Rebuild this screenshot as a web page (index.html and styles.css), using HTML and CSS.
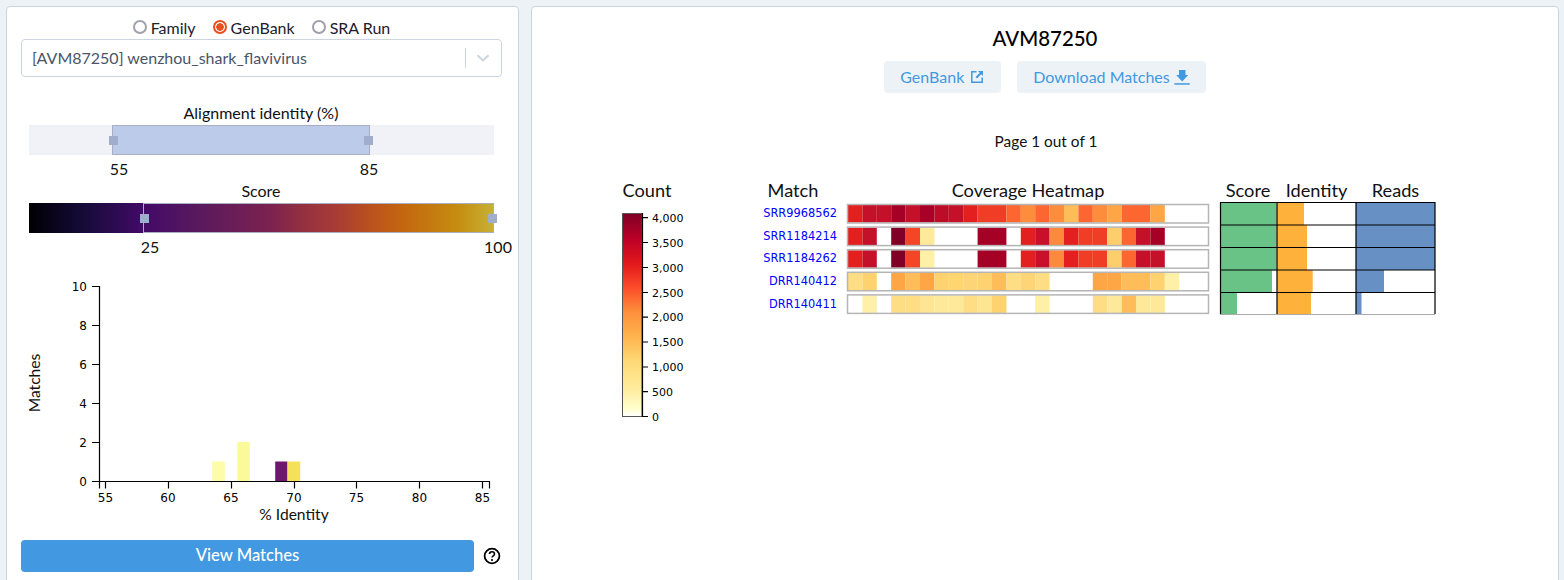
FILE: index.html
```html
<!DOCTYPE html>
<html lang="en">
<head>
<meta charset="utf-8">
<title>AVM87250</title>
<link rel="stylesheet" href="styles.css">
</head>
<body>
<div class="page">
  <aside class="panel side">
    <div class="radios">
      <label class="radio"><span class="dot"></span>Family</label>
      <label class="radio on"><span class="dot"></span>GenBank</label>
      <label class="radio"><span class="dot"></span>SRA Run</label>
    </div>
    <div class="select">
      <span class="select-value">[AVM87250] wenzhou_shark_flavivirus</span>
      <span class="select-sep"></span>
      <svg class="select-chev" width="14" height="8" viewBox="0 0 14 8"><path d="M1.5 1.2 7 6.4l5.5-5.2" fill="none" stroke="#cbd5e0" stroke-width="2"/></svg>
    </div>
    <svg class="sliders" width="511" height="162" viewBox="7 95 511 162">
      <defs>
        <linearGradient id="inferno">
          <stop offset="0" stop-color="#000004"/>
          <stop offset=".12" stop-color="#160b39"/>
          <stop offset=".245" stop-color="#420a68"/>
          <stop offset=".37" stop-color="#5a1a5c"/>
          <stop offset=".52" stop-color="#7c2250"/>
          <stop offset=".59" stop-color="#943040"/>
          <stop offset=".66" stop-color="#a83c35"/>
          <stop offset=".73" stop-color="#b9501f"/>
          <stop offset=".81" stop-color="#c4680f"/>
          <stop offset=".92" stop-color="#c58c10"/>
          <stop offset="1" stop-color="#c6b135"/>
        </linearGradient>
      </defs>
      <text class="lbl" x="261" y="119" text-anchor="middle">Alignment identity (%)</text>
      <rect x="29" y="125" width="465" height="30" fill="#f0f2f8"/>
      <rect x="112.5" y="125.5" width="257" height="29" fill="#bccbea" stroke="#a9aec2"/>
      <rect x="109" y="136" width="9" height="9" fill="#a0aecb"/>
      <rect x="364" y="136" width="9" height="9" fill="#a0aecb"/>
      <text class="lbl" x="119" y="175" text-anchor="middle">55</text>
      <text class="lbl" x="369" y="175" text-anchor="middle">85</text>
      <text class="lbl" x="261" y="197" text-anchor="middle">Score</text>
      <rect x="29" y="203" width="465" height="30" fill="url(#inferno)"/>
      <rect x="143.5" y="203.5" width="350" height="29" fill="none" stroke="#a9aec2"/>
      <rect x="140" y="214" width="9" height="9" fill="#a0aecb"/>
      <rect x="488" y="214" width="9" height="9" fill="#a0aecb"/>
      <text class="lbl" x="150" y="253" text-anchor="middle">25</text>
      <text class="lbl" x="498" y="253" text-anchor="middle">100</text>
    </svg>
    <svg class="hist" width="511" height="262" viewBox="7 270 511 262">
      <rect x="212.3" y="461.5" width="12.5" height="19.5" fill="#fcfda6"/>
      <rect x="237.3" y="442" width="12.5" height="39" fill="#fafa9b"/>
      <rect x="275.2" y="461.5" width="12.2" height="19.5" fill="#6d186e"/>
      <rect x="287.7" y="461.5" width="12.5" height="19.5" fill="#f5e05a"/>
      <path class="ax" d="M92 286.5h7.5V481.500M92 325.500h7.500M92 364.500h7.500M92 403.500h7.500M92 442.500h7.500M92 481.500h397.500v7M99.500 481.500v7M105.500 481.500v7M168.500 481.500v7M231.500 481.500v7M294.500 481.500v7M356.500 481.500v7M419.500 481.500v7M482.500 481.500v7"/>
      <g class="tick" text-anchor="end">
        <text x="87" y="291">10</text><text x="87" y="330">8</text><text x="87" y="369">6</text><text x="87" y="408">4</text><text x="87" y="447">2</text><text x="87" y="486">0</text>
      </g>
      <g class="tick" text-anchor="middle">
        <text x="105.500" y="502">55</text><text x="168" y="502">60</text><text x="231" y="502">65</text><text x="294" y="502">70</text><text x="356.500" y="502">75</text><text x="419.500" y="502">80</text><text x="482.500" y="502">85</text>
      </g>
      <text class="lbl axis-lbl" x="294" y="520" text-anchor="middle">% Identity</text>
      <text class="lbl axis-lbl" transform="translate(40 383) rotate(-90)" text-anchor="middle">Matches</text>
    </svg>
    <div class="actions">
      <button class="view">View Matches</button>
      <svg class="help" width="18" height="18" viewBox="0 0 18 18">
        <circle cx="9" cy="9" r="7.4" fill="none" stroke="#000" stroke-width="1.800"/>
        <path d="M6.500 7.100c0-1.500 1.100-2.300 2.500-2.300s2.500.8 2.500 2.200c0 1.800-2.500 1.800-2.500 3.600" fill="none" stroke="#000" stroke-width="1.600"/>
        <circle cx="9" cy="13" r="1.100"/>
      </svg>
    </div>
  </aside>
  <main class="panel content">
    <h1 class="title">AVM87250</h1>
    <div class="links">
      <a class="link link-ext">GenBank
        <svg width="14" height="14" viewBox="0 0 14 14"><path d="M6.500 1.800H1.800v10.400h10.400V7.500" fill="none" stroke="#4299e1" stroke-width="1.500"/><path d="M8 1h5v5L11.200 4.200 7 8.400 5.600 7l4.200-4.200z" fill="#4299e1"/></svg>
      </a>
      <a class="link link-dl">Download Matches
        <svg width="16" height="15" viewBox="0 0 16 15"><path d="M5 0h6.500v5h2.700L8.200 11.500 2.200 5H5z" fill="#4299e1"/><rect x="0.300" y="13.200" width="15.400" height="1.500" fill="#4299e1"/></svg>
      </a>
    </div>
    <p class="pager">Page 1 out of 1</p>
    <svg class="viz" width="1026" height="250" viewBox="532 175 1026 250">
      <defs>
        <linearGradient id="ylorrd" x1="0" y1="1" x2="0" y2="0">
          <stop offset="0" stop-color="#ffffff"/>
          <stop offset=".04" stop-color="#ffffcc"/>
          <stop offset=".13" stop-color="#ffeda0"/>
          <stop offset=".27" stop-color="#fed976"/>
          <stop offset=".4" stop-color="#feb24c"/>
          <stop offset=".52" stop-color="#fd8d3c"/>
          <stop offset=".63" stop-color="#fc4e2a"/>
          <stop offset=".75" stop-color="#e31a1c"/>
          <stop offset=".87" stop-color="#bd0026"/>
          <stop offset="1" stop-color="#800026"/>
        </linearGradient>
      </defs>
      <g class="head" text-anchor="middle">
        <text x="647" y="197">Count</text>
        <text x="793" y="197">Match</text>
        <text x="1028" y="197">Coverage Heatmap</text>
        <text x="1248" y="197">Score</text>
        <text x="1316.500" y="197">Identity</text>
        <text x="1395.500" y="197">Reads</text>
      </g>

      <rect x="622.500" y="213.500" width="19.500" height="203" fill="url(#ylorrd)" stroke="#555" stroke-width="1"/>
      <path class="ax" d="M642.500 213v204M642 217.700h6M642 242.500h6M642 267.500h6M642 292.500h6M642 317.200h6M642 342h6M642 367h6M642 391.700h6M642 416.500h6"/>
      <g class="tick sm">
        <text x="652" y="222">4,000</text><text x="652" y="247">3,500</text><text x="652" y="272">3,000</text><text x="652" y="296.500">2,500</text><text x="652" y="321">2,000</text><text x="652" y="346">1,500</text><text x="652" y="371">1,000</text><text x="652" y="396">500</text><text x="652" y="421">0</text>
      </g>

      <g class="tick acc" text-anchor="end">
        <text x="837" y="217">SRR9968562</text>
        <text x="837" y="240">SRR1184214</text>
        <text x="837" y="262">SRR1184262</text>
        <text x="837" y="285">DRR140412</text>
        <text x="837" y="308">DRR140411</text>
      </g>

      <g id="r1">
        <rect x="848" y="205" width="14.400" height="17.500" fill="#e2201f"/><rect x="862.400" y="205" width="14.400" height="17.500" fill="#c5102a"/><rect x="876.800" y="205" width="14.400" height="17.500" fill="#c5102a"/><rect x="891.200" y="205" width="14.400" height="17.500" fill="#a50026"/><rect x="905.600" y="205" width="14.400" height="17.500" fill="#c5102a"/><rect x="920" y="205" width="14.400" height="17.500" fill="#a80026"/><rect x="934.400" y="205" width="14.400" height="17.500" fill="#bd0c28"/><rect x="948.800" y="205" width="14.400" height="17.500" fill="#c5102a"/><rect x="963.200" y="205" width="14.400" height="17.500" fill="#e31f1f"/><rect x="977.600" y="205" width="14.400" height="17.500" fill="#f03e26"/><rect x="992" y="205" width="14.400" height="17.500" fill="#f03e26"/><rect x="1006.400" y="205" width="14.400" height="17.500" fill="#fd6631"/><rect x="1020.800" y="205" width="14.400" height="17.500" fill="#fd8d3c"/><rect x="1035.200" y="205" width="14.400" height="17.500" fill="#fd6631"/><rect x="1049.600" y="205" width="14.400" height="17.500" fill="#fd8d3c"/><rect x="1064" y="205" width="14.400" height="17.500" fill="#febd58"/><rect x="1078.400" y="205" width="14.400" height="17.500" fill="#fd6631"/><rect x="1092.800" y="205" width="14.400" height="17.500" fill="#fd8d3c"/><rect x="1107.200" y="205" width="14.400" height="17.500" fill="#fea546"/><rect x="1121.600" y="205" width="14.400" height="17.500" fill="#fd6631"/><rect x="1136" y="205" width="14.400" height="17.500" fill="#fd6631"/><rect x="1150.400" y="205" width="14.400" height="17.500" fill="#fea546"/>
      </g>
      <g id="r2">
        <rect x="848" y="227.600" width="14.400" height="17.500" fill="#e31f1f"/><rect x="862.400" y="227.600" width="14.400" height="17.500" fill="#c5102a"/><rect x="891.200" y="227.600" width="14.400" height="17.500" fill="#800026"/><rect x="905.600" y="227.600" width="14.400" height="17.500" fill="#f54527"/><rect x="920" y="227.600" width="14.400" height="17.500" fill="#ffe99a"/><rect x="977.600" y="227.600" width="14.400" height="17.500" fill="#a50026"/><rect x="992" y="227.600" width="14.400" height="17.500" fill="#a50026"/><rect x="1020.800" y="227.600" width="14.400" height="17.500" fill="#e31f1f"/><rect x="1035.200" y="227.600" width="14.400" height="17.500" fill="#c9102a"/><rect x="1049.600" y="227.600" width="14.400" height="17.500" fill="#fd8a3c"/><rect x="1064" y="227.600" width="14.400" height="17.500" fill="#e31f1f"/><rect x="1078.400" y="227.600" width="14.400" height="17.500" fill="#f03e26"/><rect x="1092.800" y="227.600" width="14.400" height="17.500" fill="#f03e26"/><rect x="1107.200" y="227.600" width="14.400" height="17.500" fill="#fecd6c"/><rect x="1121.600" y="227.600" width="14.400" height="17.500" fill="#fd6631"/><rect x="1136" y="227.600" width="14.400" height="17.500" fill="#c5102a"/><rect x="1150.400" y="227.600" width="14.400" height="17.500" fill="#a50026"/>
      </g>
      <g id="r3">
        <rect x="848" y="250.200" width="14.400" height="17.500" fill="#e31f1f"/><rect x="862.400" y="250.200" width="14.400" height="17.500" fill="#c5102a"/><rect x="891.200" y="250.200" width="14.400" height="17.500" fill="#800026"/><rect x="905.600" y="250.200" width="14.400" height="17.500" fill="#f54527"/><rect x="920" y="250.200" width="14.400" height="17.500" fill="#fff0a8"/><rect x="977.600" y="250.200" width="14.400" height="17.500" fill="#a50026"/><rect x="992" y="250.200" width="14.400" height="17.500" fill="#a50026"/><rect x="1020.800" y="250.200" width="14.400" height="17.500" fill="#e31f1f"/><rect x="1035.200" y="250.200" width="14.400" height="17.500" fill="#c9102a"/><rect x="1049.600" y="250.200" width="14.400" height="17.500" fill="#fd8a3c"/><rect x="1064" y="250.200" width="14.400" height="17.500" fill="#e31f1f"/><rect x="1078.400" y="250.200" width="14.400" height="17.500" fill="#f03e26"/><rect x="1092.800" y="250.200" width="14.400" height="17.500" fill="#f03e26"/><rect x="1107.200" y="250.200" width="14.400" height="17.500" fill="#fecd6c"/><rect x="1121.600" y="250.200" width="14.400" height="17.500" fill="#fd6631"/><rect x="1136" y="250.200" width="14.400" height="17.500" fill="#c5102a"/><rect x="1150.400" y="250.200" width="14.400" height="17.500" fill="#c5102a"/>
      </g>
      <g id="r4">
        <rect x="848" y="272.800" width="14.400" height="17.500" fill="#fedd84"/><rect x="862.400" y="272.800" width="14.400" height="17.500" fill="#fed26f"/><rect x="891.200" y="272.800" width="14.400" height="17.500" fill="#fea546"/><rect x="905.600" y="272.800" width="14.400" height="17.500" fill="#febd58"/><rect x="920" y="272.800" width="14.400" height="17.500" fill="#fea546"/><rect x="934.400" y="272.800" width="14.400" height="17.500" fill="#fed26f"/><rect x="948.800" y="272.800" width="14.400" height="17.500" fill="#fed56f"/><rect x="963.200" y="272.800" width="14.400" height="17.500" fill="#fed576"/><rect x="977.600" y="272.800" width="14.400" height="17.500" fill="#fed26f"/><rect x="992" y="272.800" width="14.400" height="17.500" fill="#febd58"/><rect x="1006.400" y="272.800" width="14.400" height="17.500" fill="#fedd84"/><rect x="1020.800" y="272.800" width="14.400" height="17.500" fill="#fed576"/><rect x="1035.200" y="272.800" width="14.400" height="17.500" fill="#fedd84"/><rect x="1092.800" y="272.800" width="14.400" height="17.500" fill="#fea546"/><rect x="1107.200" y="272.800" width="14.400" height="17.500" fill="#fea546"/><rect x="1121.600" y="272.800" width="14.400" height="17.500" fill="#febd58"/><rect x="1136" y="272.800" width="14.400" height="17.500" fill="#febd58"/><rect x="1150.400" y="272.800" width="14.400" height="17.500" fill="#fed26f"/><rect x="1164.800" y="272.800" width="14.400" height="17.500" fill="#fff0a8"/>
      </g>
      <g id="r5">
        <rect x="862.400" y="295.400" width="14.400" height="17.500" fill="#fff0a8"/><rect x="891.200" y="295.400" width="14.400" height="17.500" fill="#fedd84"/><rect x="905.600" y="295.400" width="14.400" height="17.500" fill="#fedd84"/><rect x="920" y="295.400" width="14.400" height="17.500" fill="#fee594"/><rect x="934.400" y="295.400" width="14.400" height="17.500" fill="#fee99a"/><rect x="948.800" y="295.400" width="14.400" height="17.500" fill="#fee99a"/><rect x="963.200" y="295.400" width="14.400" height="17.500" fill="#fedd84"/><rect x="977.600" y="295.400" width="14.400" height="17.500" fill="#fee594"/><rect x="992" y="295.400" width="14.400" height="17.500" fill="#fed26f"/><rect x="1035.200" y="295.400" width="14.400" height="17.500" fill="#fff0a8"/><rect x="1092.800" y="295.400" width="14.400" height="17.500" fill="#fedd84"/><rect x="1107.200" y="295.400" width="14.400" height="17.500" fill="#fee99a"/><rect x="1121.600" y="295.400" width="14.400" height="17.500" fill="#febd58"/><rect x="1136" y="295.400" width="14.400" height="17.500" fill="#fee99a"/><rect x="1150.400" y="295.400" width="14.400" height="17.500" fill="#fee99a"/>
      </g>
      <g class="frames">
        <rect x="847.500" y="204.500" width="361" height="18.500"/>
        <rect x="847.500" y="227.100" width="361" height="18.500"/>
        <rect x="847.500" y="249.700" width="361" height="18.500"/>
        <rect x="847.500" y="272.300" width="361" height="18.500"/>
        <rect x="847.500" y="294.900" width="361" height="18.500"/>
      </g>

      <g fill="#69c386">
        <rect x="1220.500" y="202" width="56" height="112.500"/>
      </g>
      <rect x="1272" y="270.500" width="5" height="22" fill="#fff"/>
      <rect x="1237" y="292.500" width="40" height="22" fill="#fff"/>
      <g fill="#feb23c">
        <rect x="1277" y="202" width="27" height="23"/>
        <rect x="1277" y="225" width="30" height="45"/>
        <rect x="1277" y="270" width="35.700" height="22.500"/>
        <rect x="1277" y="292.500" width="34" height="22"/>
      </g>
      <g fill="#6790c5">
        <rect x="1356" y="202" width="79" height="68"/>
        <rect x="1356" y="270" width="28" height="22.500"/>
        <rect x="1356" y="292.500" width="5.500" height="22"/>
      </g>
      <path class="grid" d="M1220 202.500h215M1220 225h215M1220 247.500h215M1220 270h215M1220 292.500h215"/>
      <path class="grid" d="M1220.500 202v112M1277 202v112M1356 202v112M1435 202v112"/>
      <path d="M1220 314.500h215" stroke="#aaa" fill="none"/>
    </svg>
  </main>
</div>
</body>
</html>
```

FILE: styles.css
```css
html, body { margin: 0; height: 100%; overflow: hidden; }
body { background: #edf2f7; font-family: "Lato", "Liberation Sans", sans-serif; color: #1a202c; }
.page { display: flex; gap: 12px; padding: 6px 5px 0 6px; align-items: flex-start; }
.panel { background: #fff; border: 1px solid #cbd5e0; border-radius: 4px; height: 620px; box-sizing: border-box; }
.side { width: 513px; flex: none; padding-top: 10px; }
.content { flex: 1; min-width: 0; display: flex; flex-direction: column; align-items: center; }

.radios { display: flex; justify-content: center; gap: 17px; height: 20px; margin-bottom: 2px; padding-right: 2px; }
.radio { display: flex; align-items: center; gap: 4px; font-size: 16px; }
.dot { width: 14px; height: 14px; box-sizing: border-box; border: 2px solid #a0a0ad; border-radius: 50%; background: #fff; }
.on .dot { border-color: #e8501e; background: radial-gradient(circle, #e8501e 0 3.5px, #fff 4px); }

.select { display: flex; align-items: center; height: 38px; box-sizing: border-box; margin: 0 16px 0 14px; padding: 0 11px 2px 10px; border: 1px solid #cbd5e0; border-radius: 4px; font-size: 16px; color: #4a5568; }
.select-value { flex: 1; }
.select-sep { width: 1px; height: 20px; background: #cbd5e0; margin: 2px 10px 0 0; }
.select-chev { display: block; margin-top: 2px; }

.sliders, .hist { display: block; }
.sliders { margin-top: 18px; }
.hist { margin-top: 13px; }
.lbl { font: 16px "Lato", sans-serif; fill: #111; }
.axis-lbl { font-size: 15.600px; }
.tick { font: 12px "DejaVu Sans", sans-serif; fill: #000; }
.tick.sm { font-size: 11px; }
.tick.acc { font-size: 11.400px; fill: #0000ff; }
.ax { fill: none; stroke: #000; stroke-width: 1.200; }

.actions { display: flex; align-items: center; gap: 9px; margin: 8px 0 0 14px; }
.view { width: 453px; height: 32px; padding: 0 0 2px; border: 0; border-radius: 4px; background: #4299e1; color: #fff; font: 500 16.600px "Lato", sans-serif; }
.help { display: block; }

.title { margin: 19px 0 0; font-size: 20.400px; line-height: 24px; font-weight: 500; color: #000; }
.links { display: flex; gap: 16px; margin-top: 11px; }
.link { display: flex; align-items: center; gap: 5px; height: 32px; box-sizing: border-box; padding: 0 16px 2px; border-radius: 4px; background: #edf2f7; color: #4299e1; font-size: 16px; }
.link svg { display: block; margin-top: 2px; }
.link-ext svg { margin-right: 1px; margin-left: 1px; }
.link-dl { gap: 4px; }
.pager { margin: 38px 0 0; padding-left: 2px; font-size: 15.400px; line-height: 20px; color: #111; }
.viz { display: block; margin-top: 24px; align-self: stretch; }

.head { font: 18.200px "Lato", sans-serif; fill: #111; }
.frames rect { fill: none; stroke: #b5b5b5; stroke-width: 1.500; }
.grid { fill: none; stroke: #000; stroke-width: 1.200; }
```
